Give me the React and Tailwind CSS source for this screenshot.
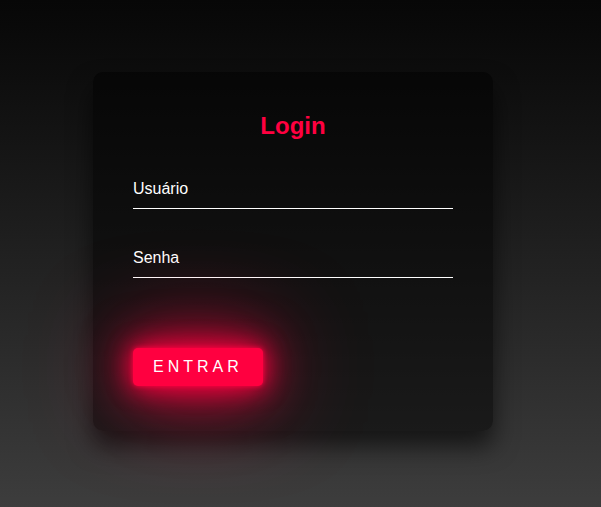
import React from 'react';

export default function App() {
  return (
    <div
      className="min-h-[507px] w-full bg-gradient-to-b from-[#070707] to-[#3d3d3d] pl-[93px] pt-[72px]"
      style={{ fontFamily: '"Liberation Sans", Arial, sans-serif' }}
    >
      <div className="w-[400px] h-[359px] rounded-[10px] bg-black/50 p-10 shadow-[0_15px_25px_rgba(0,0,0,0.6)]">
        <h2 className="m-0 mb-[30px] text-center text-2xl leading-[28px] font-bold text-[#ff0040]">Login</h2>
        <div className="mb-[30px] border-b border-white py-[10px] text-base leading-[18px] text-white">Usuário</div>
        <div className="mb-[30px] border-b border-white py-[10px] text-base leading-[18px] text-white">Senha</div>
        <button
          className="mt-[40px] rounded-[5px] bg-[#ff0040] px-[20px] py-[10px] text-base leading-[18px] tracking-[4px] uppercase text-white shadow-[0_0_5px_#ff0040,0_0_25px_#ff0040,0_0_50px_#ff0040,0_0_100px_#ff0040]"
        >
          Entrar
        </button>
      </div>
    </div>
  );
}
